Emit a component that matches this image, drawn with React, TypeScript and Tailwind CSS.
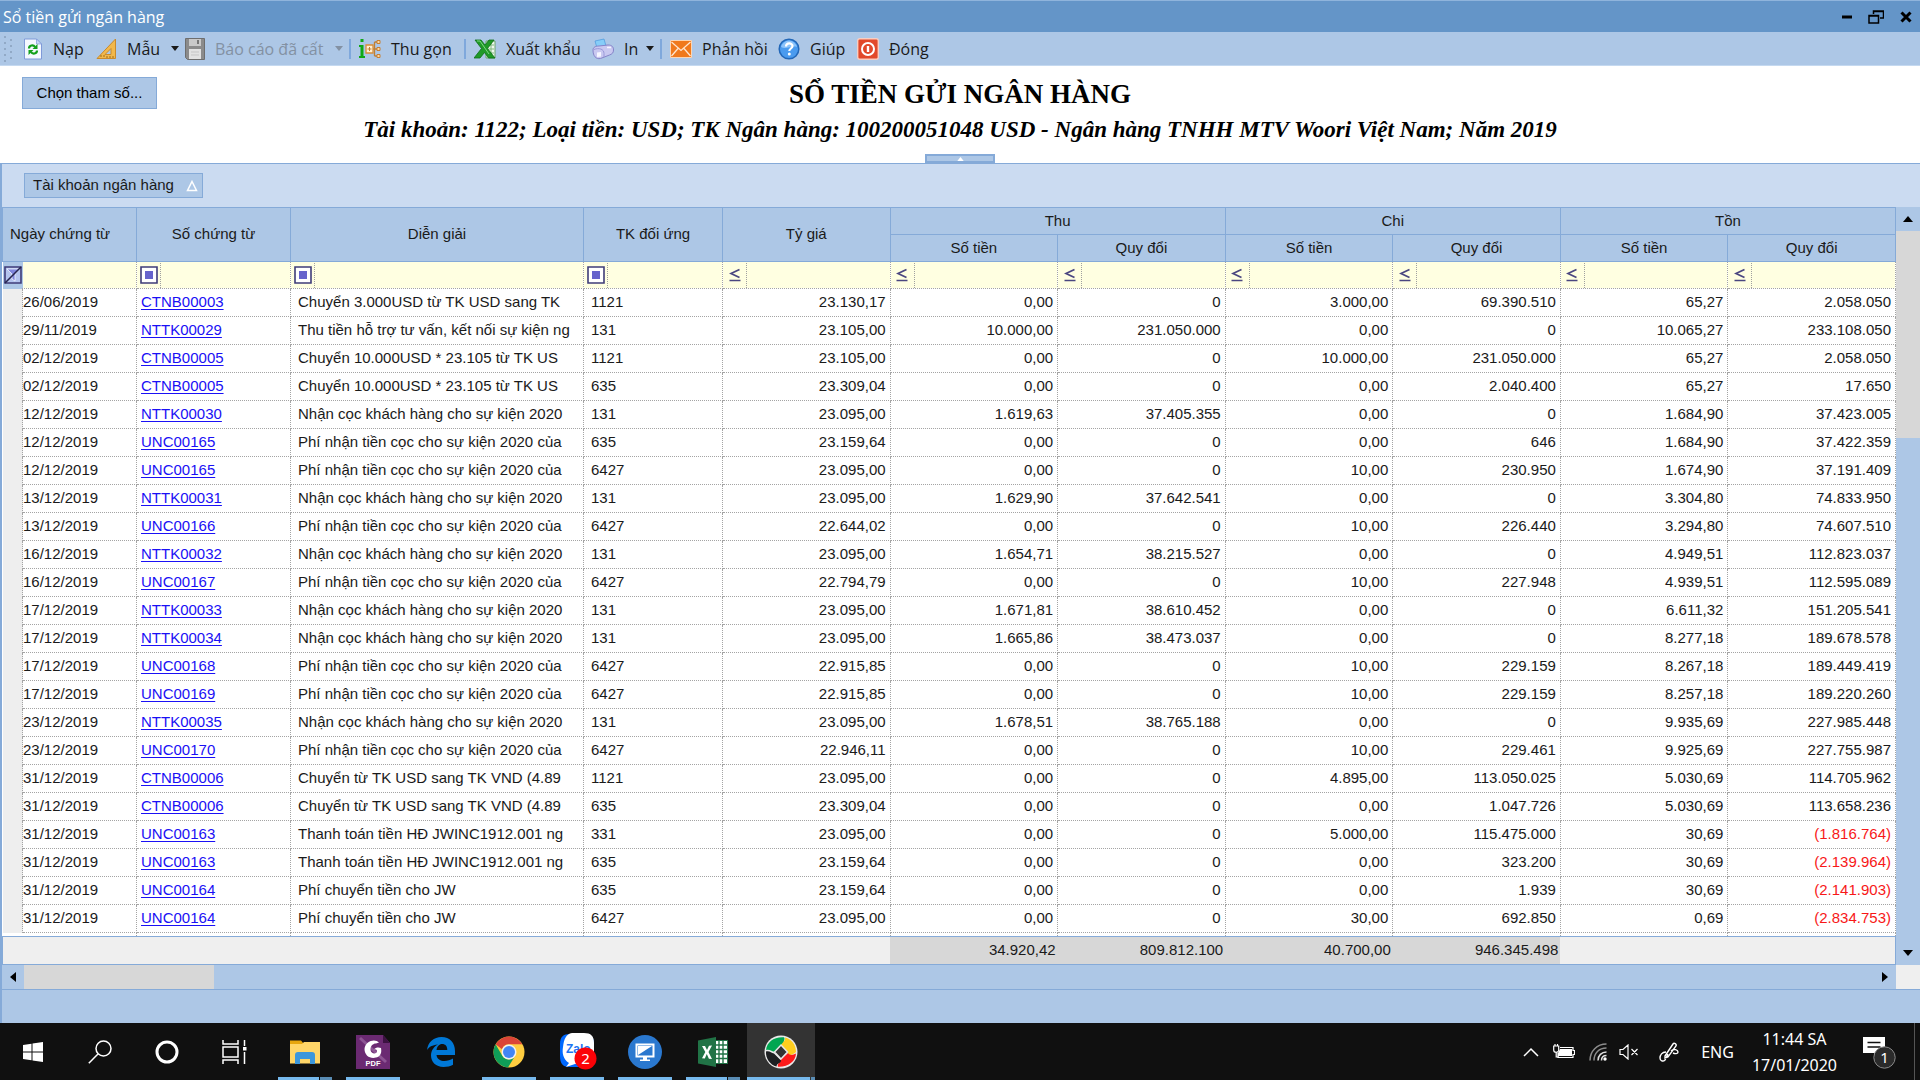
import React from "react";

const rows: string[][] = [
  ["26/06/2019", "CTNB00003", "Chuyển 3.000USD từ TK USD sang TK", "1121", "23.130,17", "0,00", "0", "3.000,00", "69.390.510", "65,27", "2.058.050"],
  ["29/11/2019", "NTTK00029", "Thu tiền hỗ trợ tư vấn, kết nối sự kiện ng", "131", "23.105,00", "10.000,00", "231.050.000", "0,00", "0", "10.065,27", "233.108.050"],
  ["02/12/2019", "CTNB00005", "Chuyển 10.000USD * 23.105 từ TK US", "1121", "23.105,00", "0,00", "0", "10.000,00", "231.050.000", "65,27", "2.058.050"],
  ["02/12/2019", "CTNB00005", "Chuyển 10.000USD * 23.105 từ TK US", "635", "23.309,04", "0,00", "0", "0,00", "2.040.400", "65,27", "17.650"],
  ["12/12/2019", "NTTK00030", "Nhận cọc khách hàng cho sự kiện 2020", "131", "23.095,00", "1.619,63", "37.405.355", "0,00", "0", "1.684,90", "37.423.005"],
  ["12/12/2019", "UNC00165", "Phí nhận tiền cọc cho sự kiện 2020 của", "635", "23.159,64", "0,00", "0", "0,00", "646", "1.684,90", "37.422.359"],
  ["12/12/2019", "UNC00165", "Phí nhận tiền cọc cho sự kiện 2020 của", "6427", "23.095,00", "0,00", "0", "10,00", "230.950", "1.674,90", "37.191.409"],
  ["13/12/2019", "NTTK00031", "Nhận cọc khách hàng cho sự kiện 2020", "131", "23.095,00", "1.629,90", "37.642.541", "0,00", "0", "3.304,80", "74.833.950"],
  ["13/12/2019", "UNC00166", "Phí nhận tiền cọc cho sự kiện 2020 của", "6427", "22.644,02", "0,00", "0", "10,00", "226.440", "3.294,80", "74.607.510"],
  ["16/12/2019", "NTTK00032", "Nhận cọc khách hàng cho sự kiện 2020", "131", "23.095,00", "1.654,71", "38.215.527", "0,00", "0", "4.949,51", "112.823.037"],
  ["16/12/2019", "UNC00167", "Phí nhận tiền cọc cho sự kiện 2020 của", "6427", "22.794,79", "0,00", "0", "10,00", "227.948", "4.939,51", "112.595.089"],
  ["17/12/2019", "NTTK00033", "Nhận cọc khách hàng cho sự kiện 2020", "131", "23.095,00", "1.671,81", "38.610.452", "0,00", "0", "6.611,32", "151.205.541"],
  ["17/12/2019", "NTTK00034", "Nhận cọc khách hàng cho sự kiện 2020", "131", "23.095,00", "1.665,86", "38.473.037", "0,00", "0", "8.277,18", "189.678.578"],
  ["17/12/2019", "UNC00168", "Phí nhận tiền cọc cho sự kiện 2020 của", "6427", "22.915,85", "0,00", "0", "10,00", "229.159", "8.267,18", "189.449.419"],
  ["17/12/2019", "UNC00169", "Phí nhận tiền cọc cho sự kiện 2020 của", "6427", "22.915,85", "0,00", "0", "10,00", "229.159", "8.257,18", "189.220.260"],
  ["23/12/2019", "NTTK00035", "Nhận cọc khách hàng cho sự kiện 2020", "131", "23.095,00", "1.678,51", "38.765.188", "0,00", "0", "9.935,69", "227.985.448"],
  ["23/12/2019", "UNC00170", "Phí nhận tiền cọc cho sự kiện 2020 của", "6427", "22.946,11", "0,00", "0", "10,00", "229.461", "9.925,69", "227.755.987"],
  ["31/12/2019", "CTNB00006", "Chuyển từ TK USD sang TK VND (4.89", "1121", "23.095,00", "0,00", "0", "4.895,00", "113.050.025", "5.030,69", "114.705.962"],
  ["31/12/2019", "CTNB00006", "Chuyển từ TK USD sang TK VND (4.89", "635", "23.309,04", "0,00", "0", "0,00", "1.047.726", "5.030,69", "113.658.236"],
  ["31/12/2019", "UNC00163", "Thanh toán tiền HĐ JWINC1912.001 ng", "331", "23.095,00", "0,00", "0", "5.000,00", "115.475.000", "30,69", "(1.816.764)"],
  ["31/12/2019", "UNC00163", "Thanh toán tiền HĐ JWINC1912.001 ng", "635", "23.159,64", "0,00", "0", "0,00", "323.200", "30,69", "(2.139.964)"],
  ["31/12/2019", "UNC00164", "Phí chuyển tiền cho JW", "635", "23.159,64", "0,00", "0", "0,00", "1.939", "30,69", "(2.141.903)"],
  ["31/12/2019", "UNC00164", "Phí chuyển tiền cho JW", "6427", "23.095,00", "0,00", "0", "30,00", "692.850", "0,69", "(2.834.753)"],
];

const cell = "border-r border-b border-dotted border-[#a4a4a4] whitespace-nowrap overflow-hidden p-0";
const head = "border border-[#85aad8] p-0 font-normal";

function Caret({ className }: { className: string }) {
  return (
    <svg viewBox="0 0 8 5" className={className} aria-hidden="true">
      <path d="M0 0h8L4 5z" fill="currentColor" />
    </svg>
  );
}

function Arrow({ dir }: { dir: "up" | "down" | "left" | "right" }) {
  const d = {
    up: "M6 3l5 6H1z",
    down: "M1 3h10L6 9z",
    left: "M9 1v10L3 6z",
    right: "M3 1v10l6-5z",
  }[dir];
  return (
    <svg viewBox="0 0 12 12" className="size-3" aria-hidden="true">
      <path d={d} fill="#000" />
    </svg>
  );
}

function ReloadIcon() {
  return (
    <svg viewBox="0 0 20 22" className="h-[22px] w-5" aria-hidden="true">
      <path d="M1.500 1h12l5 5v15h-17z" fill="#f4f8ff" stroke="#7f9ad8" />
      <path d="M13.500 1v5h5z" fill="#c6d8f6" stroke="#7f9ad8" strokeWidth=".7" />
      <path d="M6 10.500c0-3.500 4.500-4 6-1.500M14 12.500c0 3.500-4.500 4-6 1.500" fill="none" stroke="#12a01c" strokeWidth="2.200" />
      <path d="M14.500 6v5h-5zM5.500 17v-5h5z" fill="#12a01c" />
    </svg>
  );
}

function RulerIcon() {
  return (
    <svg viewBox="0 0 21 22" className="h-[22px] w-[21px]" aria-hidden="true">
      <path d="M19.500 1v19.500H1z" fill="#f2b84b" stroke="#c98a2b" />
      <path d="M15 10.500v6H9z" fill="#adc8e6" stroke="#c98a2b" />
      <path d="M5 19v-2M8 19v-2M11 20v-2M14 20v-2M17 20v-2" stroke="#9c6a1b" />
    </svg>
  );
}

function SaveIcon() {
  return (
    <svg viewBox="0 0 20 22" className="h-[22px] w-5" aria-hidden="true">
      <path d="M.5.500h19v21h-17l-2-2z" fill="#8b8b8b" stroke="#6e6e6e" />
      <path d="M4 1h12v7H4z" fill="#c9c9c9" />
      <path d="M12 2h2v4h-2z" fill="#777" />
      <path d="M4 11h12v10H4z" fill="#e2e2e2" />
      <path d="M6 14h8M6 17h8" stroke="#c5c5c5" />
    </svg>
  );
}

function TreeIcon() {
  return (
    <svg viewBox="0 0 22 22" className="size-[22px]" aria-hidden="true">
      <path d="M1.500 1h3v3h-3zM0 7h4.500v11H6v2H0v-2h1.500V9H0z" fill="#0fa816" />
      <path d="M13 11h6M15.500 4v14M15.500 4H19M15.500 18H19" stroke="#c07f33" fill="none" strokeWidth="1.300" />
      <path d="M7 7h7v8H7z" fill="#fff0d4" stroke="#d88d36" strokeWidth="1.300" />
      <path d="M8.500 11h4M10.500 9v4" stroke="#c07f33" />
      <path d="M18 2.500h3v3h-3zM18 9.500h3v3h-3zM18 16.500h3v3h-3z" fill="#ffd9a0" stroke="#c77f30" />
    </svg>
  );
}

function ExcelIcon() {
  return (
    <svg viewBox="0 0 22 22" className="size-[22px]" aria-hidden="true">
      <path d="M12 3h9v17h-9z" fill="#eef7ee" stroke="#6aa56a" />
      <path d="M14 7h6M14 11h6M14 15h6M17 4v15" stroke="#7fb87f" />
      <path d="M1 2h6l4 5 4-5h5l-6.500 8.500L21 20h-6.500l-4-5.500L6 20H0l7.500-9.500z" fill="#1f9a27" stroke="#0f6f18" strokeWidth=".8" />
      <path d="M3 3h3l9 13" stroke="#7fd884" fill="none" />
    </svg>
  );
}

function PrinterIcon() {
  return (
    <svg viewBox="0 0 22 22" className="size-[22px]" aria-hidden="true">
      <path d="M3 3l9-2 2 7-9 2z" fill="#86cdf8" stroke="#4a98dc" strokeWidth=".7" />
      <path d="M1 12c0-3 3-4 6-4l9-1c4 0 5.500 2 5.500 5s-1.500 4-4 5l-9 3.500C4 21.500 1 18 1 12z" fill="#c9c8f0" stroke="#8583c8" />
      <path d="M2 11.500c5-2 10-.5 10 4V19" fill="none" stroke="#9a98d8" />
      <path d="M5 14.500l4-.5v4.500l-4 .5z" fill="#f6f5ff" />
      <path d="M15 9.500h4" stroke="#f6f5ff" strokeWidth="1.500" />
    </svg>
  );
}

function MailIcon() {
  return (
    <svg viewBox="0 0 22 18" className="h-[18px] w-[22px]" aria-hidden="true">
      <path d="M.5.500h21v17H.5z" fill="#f0791c" stroke="#fbd5b3" />
      <path d="M1.500 2l9.500 8.500L20.500 2M1.500 16L8 8.500M20.500 16L14 8.500" fill="none" stroke="#ffe6cf" strokeWidth="1.300" />
    </svg>
  );
}

function HelpIcon() {
  return (
    <svg viewBox="0 0 22 22" className="size-[22px]" aria-hidden="true">
      <circle cx="11" cy="11" r="9.800" fill="#4a9bef" stroke="#2267b8" strokeWidth="1.500" />
      <path d="M3 9a8.200 8.200 0 0 1 16 0c-5-2-11 3-16 0z" fill="#8cc3fa" />
      <path d="M8 8.500c0-4 6.500-4 6.500-.5 0 2.500-3.200 2.500-3.200 5" fill="none" stroke="#fff" strokeWidth="2.200" />
      <circle cx="11.300" cy="16" r="1.500" fill="#fff" />
    </svg>
  );
}

function PowerIcon() {
  return (
    <svg viewBox="0 0 22 22" className="size-[22px]" aria-hidden="true">
      <rect x=".7" y=".7" width="20.600" height="20.600" rx="2" fill="#e2492a" stroke="#f9cdc0" strokeWidth="1.400" />
      <circle cx="11" cy="11" r="6" fill="none" stroke="#fff" strokeWidth="2" />
      <path d="M11 8v6" stroke="#fff" strokeWidth="2.400" />
    </svg>
  );
}

function ToolButton({ icon, label, caret, disabled, className }: { icon: React.ReactNode; label: string; caret?: boolean; disabled?: boolean; className: string }) {
  return (
    <button type="button" disabled={disabled} className={`flex shrink-0 items-center text-left disabled:text-[#8391a3] [&>svg]:shrink-0 ${className}`}>
      {icon}
      <span className="ml-2.5 whitespace-nowrap">{label}</span>
      {caret && <Caret className="mr-1.5 ml-auto h-[5px] w-2" />}
    </button>
  );
}

function Separator() {
  return <span className="mr-2 h-5 w-0.5 shrink-0 bg-[#7fa8dc]" />;
}

function TextFilterIcon() {
  return (
    <svg viewBox="0 0 18 18" className="size-[18px]" aria-hidden="true">
      <path d="M1 1h16v16H1z" fill="#fff" stroke="#3f3c78" strokeWidth="1.600" />
      <path d="M5 5h8v8H5z" fill="#6663cc" />
    </svg>
  );
}

function ClearFilterIcon() {
  return (
    <svg viewBox="0 0 18 18" className="size-[18px]" aria-hidden="true">
      <path d="M1 1h16v16H1z" fill="#b4c4ee" stroke="#3f3c78" strokeWidth="1.600" />
      <path d="M3 3h12l-4 5v7l-3-2V8z" fill="#7f86dc" stroke="#fff" strokeWidth=".7" />
      <path d="M1 17L17 1" stroke="#26244f" strokeWidth="1.600" />
    </svg>
  );
}

function LessEqualIcon() {
  return (
    <svg viewBox="0 0 14 14" className="size-3.5" aria-hidden="true">
      <path d="M11.500 1.500L3 5.500l8.500 4M1.500 12.500h11" fill="none" stroke="#4a4680" strokeWidth="1.700" />
    </svg>
  );
}

function FilterCell({ numeric, label }: { numeric?: boolean; label: string }) {
  return (
    <td className={`${cell} bg-[#ffffe1]`}>
      <div className="flex h-[25px] items-center">
        <button type="button" aria-label={`Điều kiện lọc ${label}`} className="flex h-full w-6 shrink-0 items-center justify-center border-r border-dotted border-[#a0a0a0]">
          {numeric ? <LessEqualIcon /> : <TextFilterIcon />}
        </button>
        <input aria-label={`Lọc ${label}`} className="h-full w-full min-w-0 bg-transparent px-1 outline-none" />
      </div>
    </td>
  );
}

function TaskItem({ label, children, running, stacked, active }: { label: string; children: React.ReactNode; running?: boolean; stacked?: boolean; active?: boolean }) {
  return (
    <button type="button" aria-label={label} className={`relative flex h-full w-[68px] shrink-0 items-center justify-center ${active ? "bg-[#333333]" : ""}`}>
      {children}
      {running && (
        <span className={`absolute bottom-0 flex h-[3px] ${active ? "inset-x-0" : "inset-x-[7px]"}`}>
          <span className="flex-1 bg-[#76b9ed]" />
          {stacked && <span className={`ml-px bg-[#5a8db5] ${active ? "w-1" : "w-3"}`} />}
        </span>
      )}
    </button>
  );
}

function Taskbar() {
  return (
    <footer className="flex h-[57px] shrink-0 items-stretch bg-[#101010] font-['Noto_Sans',sans-serif] text-[16px] text-white">
      <button type="button" aria-label="Start" className="flex w-[66px] items-center justify-center">
        <svg viewBox="0 0 20 20" className="size-5"><path d="M0 3l8.500-1.200v7.700H0zM9.500 1.600L20 0v9.500H9.500zM0 10.500h8.500v7.700L0 17zM9.500 10.500H20V20L9.500 18.400z" fill="#fff" /></svg>
      </button>
      <button type="button" aria-label="Tìm kiếm" className="flex w-[68px] items-center justify-center">
        <svg viewBox="0 0 24 24" className="size-6"><circle cx="15.500" cy="8.500" r="7.500" fill="none" stroke="#fff" strokeWidth="1.500" /><path d="M10.200 13.800L.8 23.200" stroke="#fff" strokeWidth="1.500" /></svg>
      </button>
      <button type="button" aria-label="Cortana" className="flex w-[66px] items-center justify-center">
        <svg viewBox="0 0 24 24" className="size-6"><circle cx="12" cy="12" r="10" fill="none" stroke="#fff" strokeWidth="3" /></svg>
      </button>
      <button type="button" aria-label="Chế độ xem tác vụ" className="mr-[3px] flex w-[68px] items-center justify-center">
        <svg viewBox="0 0 25 24" className="h-6 w-[25px]"><path d="M1 0v4h15V0M1 24v-4h15v4M1 7h15v10H1zM22.500 0v6M22.500 12v12" fill="none" stroke="#fff" strokeWidth="1.500" /><path d="M21 7h3.500v3.500H21z" fill="#fff" /></svg>
      </button>
      <TaskItem label="File Explorer" running stacked>
        <svg viewBox="0 0 30 26" className="h-[26px] w-[30px]">
          <path d="M0 1.500h11l2.500 3H30V24H0z" fill="#e6a60d" /><path d="M0 5h12l2-2h16v21.500H0z" fill="#ffd668" />
          <path d="M5 25v-9c0-2 1-3 3-3h14c2 0 3 1 3 3v9h-5v-5H10v5z" fill="#3c97dc" />
        </svg>
      </TaskItem>
      <TaskItem label="PDF" running>
        <svg viewBox="0 0 34 34" className="size-[34px]">
          <path d="M0 0h27l7 8v26H0z" fill="#6b2a72" /><path d="M4 3l26 24" stroke="#8d5594" strokeWidth="3" /><path d="M27 0v8h7z" fill="#3c1242" />
          <path d="M23 7.500C19 3 9 6 8.500 14c0 8 8 11 14 7.500 3-2 3-5 2.500-8.500-2-1-5-1-7.500 1.500 2-.5 3.500 0 3.500 2 0 2.500-6 3-6.500-1.500-.5-5 4-7 5.500-6.500z" fill="#fff" />
          <text x="17" y="31" fontFamily="Liberation Sans" fontWeight="700" fontSize="7.500" fill="#fff" textAnchor="middle">PDF</text>
        </svg>
      </TaskItem>
      <TaskItem label="Edge">
        <svg viewBox="0 0 28 30" className="h-[30px] w-7">
          <path d="M0 13C1 5 7 0 14.500 0 23 0 28 6 28 14v4H9.500c.5 4 4 6 8 6 3 0 6-1 8.500-2.500v6.300C23.500 29.300 20 30 16.500 30 9 30 4 25 4 18.500c0-5 3-9 7-11C5 8 2 10 0 13zm9.500 0h10.800c0-4-2-6-5.200-6-3 0-5 2.500-5.600 6z" fill="#0078d7" />
        </svg>
      </TaskItem>
      <TaskItem label="Chrome" running>
        <svg viewBox="0 0 32 32" className="size-8">
          <circle cx="16" cy="16" r="15.500" fill="#ffcd40" />
          <path d="M2.600 8.300A15.500 15.500 0 0 1 29.400 8.300H16a7.500 7.500 0 0 0-7 5z" fill="#db4437" />
          <path d="M2.600 8.300A15.500 15.500 0 0 0 15 31.500l7-11.500a7.500 7.500 0 0 1-12.600 0z" fill="#0f9d58" />
          <circle cx="16" cy="16" r="7.500" fill="#f1f1f1" /><circle cx="16" cy="16" r="6" fill="#4285f4" />
        </svg>
      </TaskItem>
      <TaskItem label="Zalo, 2 tin mới" running>
        <svg viewBox="0 0 37 37" className="ml-[3px] size-[37px]">
          <path d="M10 1h14c7 0 10 3 10 10v12c0 8-3 11-10 11H10C3 34 0 31 0 23V11C0 4 3 1 10 1z" fill="#0068ff" />
          <path d="M12 0h12c7 0 10 3 10 10v13c0 6-5 8-10 8h-9l-9 3 3-4C3 26 2 20 3 14 4 6 6 1 12 0z" fill="#fff" />
          <text x="6" y="20" fontFamily="Liberation Sans" fontWeight="700" fontSize="12" fill="#1d75f2">Zalo</text>
          <circle cx="25.500" cy="25.500" r="11" fill="#fb0207" />
          <text x="25.500" y="31" fontFamily="Noto Sans" fontSize="15" fill="#fff" textAnchor="middle">2</text>
        </svg>
      </TaskItem>
      <TaskItem label="Máy tính từ xa" running>
        <svg viewBox="0 0 34 34" className="size-[34px]">
          <circle cx="17" cy="17" r="17" fill="#2a78cf" />
          <path d="M8.500 9.500h17v12h-17z" fill="#2a78cf" stroke="#fff" strokeWidth="2" /><path d="M10 20V11h14z" fill="#fff" /><path d="M15 22h4v2.500h3V26H12v-1.500h3z" fill="#fff" />
        </svg>
      </TaskItem>
      <TaskItem label="Excel" running stacked>
        <svg viewBox="0 0 30 30" className="size-[30px]">
          <path d="M16 3.500h13.500v23H16z" fill="#fff" stroke="#217346" /><path d="M17 8h12M17 12.500h12M17 17h12M17 21.500h12M21 4v22M25 4v22" stroke="#217346" strokeWidth="1.400" />
          <path d="M0 3.500L18 0v30L0 26.500z" fill="#217346" /><path d="M4 9h3l2 4 2-4.300 3-.2-3.500 6.500L14 22l-3.100-.2L8.800 17l-2 4.500L4 21.300 7.300 15z" fill="#fff" />
        </svg>
      </TaskItem>
      <TaskItem label="MISA" running stacked active>
        <svg viewBox="0 0 34 34" className="size-[34px]">
          <circle cx="17" cy="17" r="16.500" fill="#e9e9e9" />
          <path d="M2 15C3 7 10 1.500 20 2.300c1.500 2-1 4 0 6.200L11 17c-3 0-5-3-9-2z" fill="#00a651" />
          <path d="M21 2.500C28 4 32 10 32 17c-2 2-4 2-6 4l-9-10c0-3 5-5 4-8.500z" fill="#ffce1f" />
          <path d="M32 18.500C31.500 26 25 32 14 31.700c-1-3 2-4 1.500-6L24 18c2 3 5 2 8 .5z" fill="#fc1a1a" />
          <path d="M12.500 31.500C6 30 1.500 23 2 16.500c4-1 5 2 8 2l7 7c0 3-4 2-4.500 6z" fill="#1d1f22" />
          <path d="M17 10l6.500 7-6.500 7-6.500-7z" fill="#333" stroke="#e9e9e9" strokeWidth="1.500" />
        </svg>
      </TaskItem>
      <div className="ml-auto flex items-center">
        <button type="button" aria-label="Hiện biểu tượng ẩn" className="mr-3.5"><svg viewBox="0 0 16 10" className="h-2.5 w-4"><path d="M1 9l7-7 7 7" fill="none" stroke="#fff" strokeWidth="1.500" /></svg></button>
        <svg viewBox="0 0 22 16" className="mr-3.5 h-4 w-[22px]" aria-label="Pin"><path d="M7 5h12v7H5V9z" fill="#fff" /><path d="M5 9v4.500h15v-3h1.500v-4H20v-3H7M.7 2v4c0 3 5 3 5 0V2zM3.200 8v5H6M2 0v2M4.500 0v2" fill="none" stroke="#fff" strokeWidth="1.200" /></svg>
        <svg viewBox="0 0 18 18" className="mr-3 size-[18px]" aria-label="Wi-Fi"><path d="M1 17.500C1 8 8 1 17.500 1M5 17.500C5 10 10 5 17.500 5" fill="none" stroke="#8c8c8c" strokeWidth="1.500" /><path d="M9 17.500c0-5 3.500-8.500 8.500-8.500M12.500 17.500c0-3 2-5 5-5" fill="none" stroke="#ddd" strokeWidth="1.500" /><circle cx="16" cy="16" r="1.700" fill="#fff" /></svg>
        <svg viewBox="0 0 20 16" className="mr-5 h-4 w-5" aria-label="Tắt tiếng"><path d="M1 5.500h3L9 1v14l-5-4.500H1zM12.500 5l6 6M18.500 5l-6 6" fill="none" stroke="#fff" strokeWidth="1.200" /></svg>
        <svg viewBox="0 0 20 20" className="mr-[22px] size-5" aria-label="Bút"><path d="M6 14L14 2c1-1.500 4 0 3 2L9 15l-3 1zM7 10c-4 0-6 3-6 6s3 4 5 2l3-6M12 9c3-3 7-1 7 1s-3 2-5 1" fill="none" stroke="#fff" strokeWidth="1.400" /></svg>
        <span className="mr-[18px]">ENG</span>
        <time className="mr-[26px] text-center leading-[26px]">11:44 SA<br />17/01/2020</time>
        <button type="button" aria-label="Thông báo" className="mr-[18px]">
          <svg viewBox="0 0 33 34" className="h-[34px] w-[33px]">
            <path d="M0 2h22v16h-7l-4 5v-5H0z" fill="#fff" /><path d="M4.500 7.500h13M4.500 12h13" stroke="#101010" strokeWidth="1.300" />
            <circle cx="21.500" cy="22.500" r="10.700" fill="#2b2b2b" stroke="#8a8a8a" />
            <text x="21.500" y="28" fontFamily="Noto Sans" fontSize="15" fill="#fff" textAnchor="middle">1</text>
          </svg>
        </button>
        <span className="h-full w-1.5 border-l border-[#555]" />
      </div>
    </footer>
  );
}

export default function App() {
  return (
    <div className="flex min-h-screen w-full flex-col overflow-hidden bg-[#adc7e6] font-['Liberation_Sans',sans-serif] text-[15px] text-[#1a1a1a]">
      <header className="flex h-8 shrink-0 items-center border-t border-[#8fb4dc] bg-[#6495c8] pr-2 pl-[3px] font-['Open_Sans',sans-serif] text-[16px] text-white">
        <h1>Sổ tiền gửi ngân hàng</h1>
        <div className="ml-auto flex items-center gap-4">
          <button type="button" aria-label="Thu nhỏ"><svg viewBox="0 0 10 16" className="h-4 w-2.5"><path d="M0 8h10" stroke="#000" strokeWidth="3" /></svg></button>
          <button type="button" aria-label="Khôi phục"><svg viewBox="0 0 16 16" className="size-4"><path d="M5.500 5V2h10v7H12M5 2.500h11M1 6.500h9.500V14H1zM1 7h10" fill="none" stroke="#000" strokeWidth="1.500" /></svg></button>
          <button type="button" aria-label="Đóng cửa sổ"><svg viewBox="0 0 12 12" className="size-3"><path d="M1.500 1.500l9 9M10.500 1.500l-9 9" stroke="#000" strokeWidth="3" /></svg></button>
        </div>
      </header>

      <nav className="flex h-[34px] shrink-0 items-center border-b border-[#c5d9f0] pl-1 font-['Open_Sans',sans-serif] text-[16px]" aria-label="Thanh công cụ">
        <svg viewBox="0 0 8 26" className="mr-[11px] h-[26px] w-2 shrink-0" aria-hidden="true">
          <path d="M1 0v26M7 3v23" stroke="#91a9c6" strokeWidth="2" strokeDasharray="2 4" />
        </svg>
        <ToolButton className="w-[73px]" icon={<ReloadIcon />} label="Nạp" />
        <ToolButton className="w-[89px]" icon={<RulerIcon />} label="Mẫu" caret />
        <ToolButton className="w-[164px]" icon={<SaveIcon />} label="Báo cáo đã cất" caret disabled />
        <Separator />
        <ToolButton className="w-[105px]" icon={<TreeIcon />} label="Thu gọn" />
        <Separator />
        <ToolButton className="w-[118px]" icon={<ExcelIcon />} label="Xuất khẩu" />
        <ToolButton className="w-[68px]" icon={<PrinterIcon />} label="In" caret />
        <Separator />
        <ToolButton className="w-[108px]" icon={<MailIcon />} label="Phản hồi" />
        <ToolButton className="w-[79px]" icon={<HelpIcon />} label="Giúp" />
        <ToolButton className="w-[80px]" icon={<PowerIcon />} label="Đóng" />
      </nav>

      <section className="relative h-[97px] shrink-0 bg-white text-center font-['Liberation_Serif',serif] font-bold text-black">
        <button type="button" className="absolute top-[11px] left-[22px] h-8 w-[135px] border border-[#85aad8] bg-[#adc7e6] font-['Liberation_Sans',sans-serif] text-[15px] font-normal">Chọn tham số...</button>
        <h2 className="pt-3 text-[27px] leading-8">SỔ TIỀN GỬI NGÂN HÀNG</h2>
        <p className="mt-1 text-[23px] leading-8 italic">Tài khoản: 1122; Loại tiền: USD; TK Ngân hàng: 100200051048 USD - Ngân hàng TNHH MTV Woori Việt Nam; Năm 2019</p>
        <button type="button" aria-label="Thu gọn tiêu đề" className="absolute bottom-0 left-1/2 flex h-[9px] w-[70px] -translate-x-1/2 items-center justify-center border-2 border-[#85aad8] bg-[#adc7e6] text-white">
          <Caret className="h-1 w-[7px] rotate-180" />
        </button>
      </section>

      <main className="flex flex-1 flex-col border-t border-l-2 border-[#85aad8]">
        <div className="flex h-[43px] shrink-0 items-center bg-[#cbdbf1] pl-[22px]">
          <button type="button" className="flex h-[25px] w-[179px] items-center justify-between border border-[#85aad8] bg-[#adc7e6] pr-1 pl-2">
            Tài khoản ngân hàng
            <svg viewBox="0 0 12 12" className="size-3" aria-hidden="true"><path d="M6 1.500l4.500 9h-9z" fill="none" stroke="#fff" strokeWidth="1.500" /></svg>
          </button>
        </div>
        <div className="flex shrink-0">
          <div className="min-w-0 flex-1 bg-white">
            <table className="w-full table-fixed border-collapse">
              <colgroup>
                <col className="w-5" />
                <col className="w-[114px]" />
                <col className="w-[154px]" />
                <col className="w-[293px]" />
                <col className="w-[139px]" />
                <col /><col /><col /><col /><col /><col /><col />
              </colgroup>
              <thead className="bg-[#adc7e6]">
                <tr className="h-[27px]">
                  <th rowSpan={2} colSpan={2} className={`${head} pl-[7px] text-left`}>Ngày chứng từ</th>
                  <th rowSpan={2} className={head}>Số chứng từ</th>
                  <th rowSpan={2} className={head}>Diễn giải</th>
                  <th rowSpan={2} className={head}>TK đối ứng</th>
                  <th rowSpan={2} className={head}>Tỷ giá</th>
                  <th colSpan={2} className={head}>Thu</th>
                  <th colSpan={2} className={head}>Chi</th>
                  <th colSpan={2} className={head}>Tồn</th>
                </tr>
                <tr className="h-[27px]">
                  {["Thu", "Chi", "Tồn"].map((g) => (
                    <React.Fragment key={g}>
                      <th className={head}>Số tiền</th>
                      <th className={head}>Quy đổi</th>
                    </React.Fragment>
                  ))}
                </tr>
              </thead>
              <tbody>
                <tr className="h-[27px]">
                  <td className="bg-[#adc7e6] p-0"><button type="button" aria-label="Xóa bộ lọc" className="flex pl-px"><ClearFilterIcon /></button></td>
                  <td className={`${cell} bg-[#ffffe1]`}><input aria-label="Lọc ngày chứng từ" className="block h-[25px] w-full bg-transparent px-1 outline-none" /></td>
                  <FilterCell label="số chứng từ" />
                  <FilterCell label="diễn giải" />
                  <FilterCell label="TK đối ứng" />
                  {["tỷ giá", "thu số tiền", "thu quy đổi", "chi số tiền", "chi quy đổi", "tồn số tiền", "tồn quy đổi"].map((l) => (
                    <FilterCell key={l} numeric label={l} />
                  ))}
                </tr>
                {rows.map((r, i) => (
                  <tr key={i} className="h-7">
                    <td className="border-r border-dotted border-[#a4a4a4] bg-[#eeeeee] p-0" />
                    <td className={cell}>{r[0]}</td>
                    <td className={`${cell} pl-1`}><a href={`#${r[1]}`} className="text-[#1a10f5] underline underline-offset-2">{r[1]}</a></td>
                    <td className={`${cell} pl-[7px]`}>{r[2]}</td>
                    <td className={`${cell} pl-[7px]`}>{r[3]}</td>
                    {r.slice(4).map((v, k) => (
                      <td key={k} className={`${cell} pr-1 text-right ${v.startsWith("(") ? "text-[#f81818]" : ""}`}>{v}</td>
                    ))}
                  </tr>
                ))}
                <tr className="h-1">
                  {Array.from({ length: 12 }, (_, k) => <td key={k} className={`${k ? "border-r" : ""} border-dotted border-[#a4a4a4] p-0`} />)}
                </tr>
              </tbody>
              <tfoot className="border border-[#85aad8]">
                <tr className="h-7 bg-[#efefef]">
                  <td colSpan={6} className="p-0" />
                  {["34.920,42", "809.812.100", "40.700,00", "946.345.498"].map((v) => (
                    <td key={v} className="bg-[#d7d7d7] p-0 pr-0.5 text-right">{v}</td>
                  ))}
                  <td colSpan={2} className="p-0" />
                </tr>
              </tfoot>
            </table>
          </div>
          <div className="flex w-6 shrink-0 flex-col items-center">
            <button type="button" aria-label="Cuộn lên" className="flex h-6 items-center"><Arrow dir="up" /></button>
            <span className="h-[207px] w-full bg-[#d7d7d7]" />
            <button type="button" aria-label="Cuộn xuống" className="mt-auto flex h-6 items-center"><Arrow dir="down" /></button>
          </div>
        </div>
        <div className="flex h-[25px] shrink-0 border-b border-[#85aad8]">
          <div className="flex flex-1 items-center">
            <button type="button" aria-label="Cuộn trái" className="flex w-[22px] justify-center"><Arrow dir="left" /></button>
            <span className="h-full w-[190px] bg-[#d7d7d7]" />
            <button type="button" aria-label="Cuộn phải" className="mr-[5px] ml-auto"><Arrow dir="right" /></button>
          </div>
          <span className="w-6 bg-[#efefef]" />
        </div>
      </main>
      <Taskbar />
    </div>
  );
}
